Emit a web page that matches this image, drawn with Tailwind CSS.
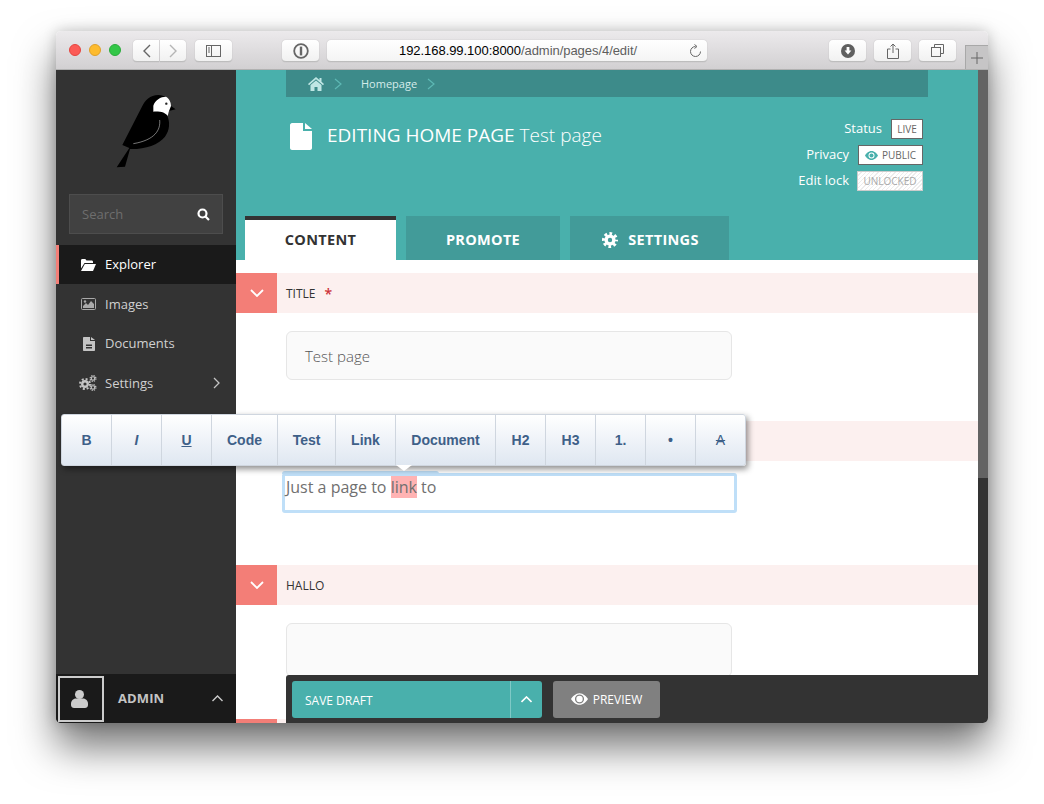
<!DOCTYPE html>
<html lang="en">

<head>
    <meta charset="UTF-8">
    <meta name="viewport" content="width=device-width, initial-scale=1.0">
    <script src="https://cdn.jsdelivr.net/npm/@tailwindcss/browser@4"></script>
    <title>Editing Home Page Test page</title>
</head>

<body class="bg-white h-[804px] w-[1044px] overflow-hidden font-['Open_Sans',sans-serif] pt-[31px] pl-[56px]">
    <div class="relative w-[932px] h-[692px] rounded-[5px] shadow-[0_24px_40px_rgba(0,0,0,0.55),0_0_14px_rgba(0,0,0,0.2)] flex flex-col">
        <!-- Browser toolbar -->
        <header class="h-[39px] shrink-0 rounded-t-[5px] border-b border-[#b1b1b1] bg-gradient-to-b from-[#eceaec] to-[#d2d0d2] flex items-start pt-[9px] pl-[13px] relative">
            <span class="w-3 h-3 mt-[4px] rounded-full bg-[#fc5b57] border border-[#e5453f]"></span>
            <span class="w-3 h-3 mt-[4px] ml-2 rounded-full bg-[#fdbb2e] border border-[#e0a028]"></span>
            <span class="w-3 h-3 mt-[4px] ml-2 rounded-full bg-[#33c748] border border-[#2aac3b]"></span>
            <button class="ml-[12px] w-[26px] h-[22px] rounded-l-[4px] bg-gradient-to-b from-white to-[#f1f1f1] border-b border-[#bdbdbd] shadow-[0_0_1px_rgba(0,0,0,0.3)] flex items-center justify-center">
                <svg width="9" height="14" viewBox="0 0 9 14" fill="none" stroke="#666" stroke-width="1.4"><path d="M8 1 2 7l6 6"/></svg>
            </button>
            <button class="ml-[1px] w-[26px] h-[22px] rounded-r-[4px] bg-gradient-to-b from-white to-[#f1f1f1] border-b border-[#bdbdbd] shadow-[0_0_1px_rgba(0,0,0,0.3)] flex items-center justify-center">
                <svg width="9" height="14" viewBox="0 0 9 14" fill="none" stroke="#b5b5b5" stroke-width="1.4"><path d="m1 1 6 6-6 6"/></svg>
            </button>
            <button class="ml-[9px] w-[37px] h-[22px] rounded-[4px] bg-gradient-to-b from-white to-[#f1f1f1] border-b border-[#bdbdbd] shadow-[0_0_1px_rgba(0,0,0,0.3)] flex items-center justify-center">
                <svg width="15" height="12" viewBox="0 0 15 12" fill="none" stroke="#666"><rect x=".5" y=".5" width="14" height="11"/><path d="M5.5 0v12M2 3h2M2 5h2M2 7h2"/></svg>
            </button>
            <button class="ml-[50px] w-[37px] h-[22px] rounded-[4px] bg-gradient-to-b from-white to-[#f1f1f1] border-b border-[#bdbdbd] shadow-[0_0_1px_rgba(0,0,0,0.3)] flex items-center justify-center">
                <svg width="16" height="16" viewBox="0 0 16 16"><circle cx="8" cy="8" r="6.8" fill="none" stroke="#666" stroke-width="1.8"/><rect x="6.8" y="3.6" width="2.4" height="8.8" fill="#666"/></svg>
            </button>
            <div class="relative ml-[8px] w-[380px] h-[22px] rounded-[4px] bg-gradient-to-b from-white to-[#f4f4f4] border-b border-[#bdbdbd] shadow-[0_0_1px_rgba(0,0,0,0.3)] flex items-center justify-center pl-[2px] font-['Liberation_Sans',sans-serif] text-[13px] tracking-[-0.05px] text-black">
                <span>192.168.99.100:8000<span class="text-[#5e5e5e]">/admin/pages/4/edit/</span></span>
                <svg class="absolute right-[6px] top-[4px]" width="13" height="14" viewBox="0 0 13 14" fill="none" stroke="#666"><path d="M7.5 2.5a5 5 0 1 0 5 5"/><path d="M6.5.5 9 2.5 6.5 4.5" /></svg>
            </div>
            <button class="ml-[122px] w-[37px] h-[22px] rounded-[4px] bg-gradient-to-b from-white to-[#f1f1f1] border-b border-[#bdbdbd] shadow-[0_0_1px_rgba(0,0,0,0.3)] flex items-center justify-center">
                <svg width="14" height="14" viewBox="0 0 14 14"><circle cx="7" cy="7" r="7" fill="#5f5f5f"/><path d="M5.6 3h2.8v3.5h2L7 10.5l-3.400-4h2z" fill="#fff"/></svg>
            </button>
            <button class="ml-[8px] w-[37px] h-[22px] rounded-[4px] bg-gradient-to-b from-white to-[#f1f1f1] border-b border-[#bdbdbd] shadow-[0_0_1px_rgba(0,0,0,0.3)] flex items-center justify-center">
                <svg width="12" height="16" viewBox="0 0 12 16" fill="none" stroke="#666"><path d="M3.500 6H.5v9.500h11V6h-3M6 10V1M3.500 3.500 6 1l2.500 2.500"/></svg>
            </button>
            <button class="ml-[8px] w-[37px] h-[22px] rounded-[4px] bg-gradient-to-b from-white to-[#f1f1f1] border-b border-[#bdbdbd] shadow-[0_0_1px_rgba(0,0,0,0.3)] flex items-center justify-center">
                <svg width="13" height="13" viewBox="0 0 13 13" fill="none" stroke="#666"><rect x=".5" y="3.500" width="9" height="9"/><path d="M3.500 3.500v-3h9v9h-3"/></svg>
            </button>
            <div class="absolute right-0 bottom-0 w-[23px] h-[24px] bg-[#c6c5c6] border-t border-l border-[#a8a8a8] flex items-center justify-center">
                <svg width="12" height="12" viewBox="0 0 12 12" stroke="#666"><path d="M6 0v12M0 6h12"/></svg>
            </div>
        </header>

        <div class="flex flex-1 min-h-0 overflow-hidden rounded-b-[5px]">
            <!-- Sidebar -->
            <aside class="w-[180px] shrink-0 bg-[#333] flex flex-col">
                <svg class="ml-[34px] mt-[10px]" width="100" height="100" viewBox="0 0 300 300">
                    <path d="M205 45C180 45 165 60 155 82L97 195 118 204 80 262 105 260 120 207C165 208 205 195 225 170 240 150 240 125 232 108L237 93 257 88 243 78C235 55 225 45 205 45Z" fill="#000"/>
                    <path d="M190 77C195 60 212 50 228 50 238 55 243 67 243 78L237 93 233 108C225 98 215 94 190 95Z" fill="#fff"/>
                    <circle cx="229" cy="71" r="3.500" fill="#222"/>
                    <path d="M209 120C212 150 195 180 130 191" fill="none" stroke="#ddd" stroke-width="1.600"/>
                </svg>
                <div class="ml-[13px] mt-[14px] w-[154px] h-[40px] border border-[#4d4d4d] bg-[#414141] flex items-center justify-between pl-[12px] pr-[12px] text-[13px] text-[#6e6e6e]">
                    <span class="pt-[2px]">Search</span>
                    <svg width="13" height="13" viewBox="0 0 13 13" fill="none" stroke="#fff" stroke-width="2.200"><circle cx="5.500" cy="5.500" r="4"/><path d="m8.500 8.500 3.500 3.500"/></svg>
                </div>
                <nav class="mt-[11px] text-[13px] text-[#d0d0d0]">
                    <a class="h-[39px] bg-[#1a1a1a] border-l-[3px] border-[#f37e77] text-white flex items-center pl-[22px] gap-[9px]">
                        <svg class="w-[15px]" width="15" height="12" viewBox="0 0 15 12" fill="#fff"><path d="M0 1.500C0 .7.500 0 1.300 0h3l1.200 1.500h5.200c.7 0 1.300.6 1.300 1.300V4H3.500L0 9.500z"/><path d="M3.800 5H15l-3 7H0z"/></svg>
                        <span>Explorer</span>
                    </a>
                    <a class="h-[40px] flex items-center pl-[25px] gap-[9px]">
                        <svg width="15" height="12" viewBox="0 0 15 12"><rect x=".5" y=".5" width="14" height="11" rx="1" fill="none" stroke="#aaa"/><path d="M2 10V8l3-3 2 2 3-4 3 3v4z" fill="#aaa"/><circle cx="4" cy="3.500" r="1.200" fill="#aaa"/></svg>
                        <span class="pt-[2px]">Images</span>
                    </a>
                    <a class="h-[39px] flex items-center pl-[25px] gap-[9px]">
                        <svg class="ml-[2px] mr-[1px]" width="12" height="14" viewBox="0 0 12 14" fill="#c4c4c4"><path fill-rule="evenodd" d="M0 1C0 .4.400 0 1 0h6v4h5v9c0 .6-.4 1-1 1H1c-.6 0-1-.4-1-1zm3 6.500V9h6V7.500zm0 2.500v1.500h6V10z"/><path d="M8 0l4 3H8z"/></svg>
                        <span>Documents</span>
                    </a>
                    <a class="h-[40px] flex items-center pl-[23px] pr-[16px] gap-[8px]">
                        <svg width="18" height="16" viewBox="0 0 18 16" fill="none" stroke="#c4c4c4">
                            <circle cx="6" cy="9" r="2.800" stroke-width="2.400"/>
                            <circle cx="6" cy="9" r="5" stroke-width="2" stroke-dasharray="2 1.930"/>
                            <circle cx="14" cy="3.500" r="1.700" stroke-width="1.100"/>
                            <circle cx="14" cy="3.500" r="2.900" stroke-width="1.200" stroke-dasharray="1.300 1"/>
                            <circle cx="14" cy="12.500" r="1.700" stroke-width="1.100"/>
                            <circle cx="14" cy="12.500" r="2.900" stroke-width="1.200" stroke-dasharray="1.300 1"/>
                        </svg>
                        <span class="pt-[2px]">Settings</span>
                        <svg class="ml-auto" width="7" height="12" viewBox="0 0 7 12" fill="none" stroke="#c4c4c4" stroke-width="1.300"><path d="m1 1 5 5-5 5"/></svg>
                    </a>
                </nav>
                <div class="mt-auto h-[49px] bg-[#1a1a1a] flex items-center pl-[2px] pr-[13px]">
                    <div class="w-[46px] h-[46px] border-2 border-[#ccc] flex items-center justify-center pr-[3px]">
                        <svg width="17" height="18" viewBox="0 0 17 18" fill="#ccc"><circle cx="8.500" cy="4.500" r="4.500"/><path d="M0 14c0-4 3-5.500 5-5.500h7c2 0 5 1.500 5 5.500v1c0 2-1.500 3-3 3H3c-1.500 0-3-1-3-3z"/></svg>
                    </div>
                    <span class="ml-[14px] text-[13px] font-bold tracking-[0.1px] text-[#c4c4c4]">ADMIN</span>
                    <svg class="ml-auto" width="11" height="7" viewBox="0 0 11 7" fill="none" stroke="#ccc" stroke-width="1.400"><path d="m.5 6 5-5 5 5"/></svg>
                </div>
            </aside>

            <!-- Main column -->
            <main class="w-[742px] shrink-0 bg-white flex flex-col">
                <section class="h-[190px] shrink-0 bg-[#49b0ac] flex flex-col">
                    <div class="ml-[50px] w-[642px] h-[27px] bg-[#3d8b8a] flex items-center pl-[22px] text-[11px] text-[#d5eceb]">
                        <svg width="16" height="14" viewBox="0 0 16 14" fill="#bfe6e4"><path d="M8 0 0 7l1 1.200L8 2.200l7 6L16 7l-2.500-2.200V1h-2v2z"/><path d="M8 3.400 2.500 8v6h4v-4h3v4h4V8z"/></svg>
                        <svg class="ml-[10px]" width="8" height="12" viewBox="0 0 8 12" fill="none" stroke="#5db8b4" stroke-width="1.200"><path d="m1 1 6 5-6 5"/></svg>
                        <span class="ml-[19px] pt-[2px]">Homepage</span>
                        <svg class="ml-[10px]" width="8" height="12" viewBox="0 0 8 12" fill="none" stroke="#5db8b4" stroke-width="1.200"><path d="m1 1 6 5-6 5"/></svg>
                    </div>
                    <div class="flex justify-between pl-[54px] pr-[55px] pt-[22px]">
                        <div class="flex items-start gap-[15px] pt-[4px]">
                            <svg width="22" height="27" viewBox="0 0 22 27" fill="#fff"><path d="M2 0h11v8h9v17c0 1-1 2-2 2H2c-1 0-2-1-2-2V2C0 1 1 0 2 0z"/><path d="M15 0l7 6h-7z"/></svg>
                            <h1 class="text-[19px] leading-[24px] text-white font-medium">EDITING HOME PAGE <span class="font-light">Test page</span></h1>
                        </div>
                        <div class="flex flex-col items-end gap-[6px] text-[13px] text-white">
                            <div class="flex items-center gap-[9px]"><span>Status</span><span class="h-[20px] w-[32px] bg-white border border-[#666] flex items-center justify-center text-[10px] text-[#666]">LIVE</span></div>
                            <div class="flex items-center gap-[9px]"><span>Privacy</span><span class="h-[20px] w-[65px] bg-white border border-[#666] flex items-center justify-center gap-[4px] text-[10px] text-[#666]"><svg width="13" height="9" viewBox="0 0 13 9"><path fill-rule="evenodd" d="M6.500 0C9.500 0 12 2.500 13 4.500 12 6.500 9.500 9 6.500 9S1 6.500 0 4.500C1 2.500 3.500 0 6.500 0zm0 1.500a3 3 0 1 0 0 6 3 3 0 0 0 0-6z" fill="#49b0ac"/><circle cx="6.500" cy="4.500" r="2" fill="#49b0ac"/></svg>PUBLIC</span></div>
                            <div class="flex items-center gap-[8px]"><span>Edit lock</span><span class="h-[20px] w-[66px] border border-[#ccc] bg-[repeating-linear-gradient(135deg,#fff,#fff_2px,#ececec_2px,#ececec_3px)] flex items-center justify-center text-[10px] text-[#aaa]">UNLOCKED</span></div>
                        </div>
                    </div>
                    <div class="mt-auto pl-[9px] flex gap-[10px] text-[14.500px] font-bold tracking-[0.3px]">
                        <a class="h-[44px] w-[151px] bg-white border-t-4 border-[#333] text-[#333] flex items-center justify-center pb-[1px]">CONTENT</a>
                        <a class="h-[44px] w-[154px] bg-[#429b99] text-white flex items-center justify-center pt-[4px]">PROMOTE</a>
                        <a class="h-[44px] w-[159px] bg-[#429b99] text-white flex items-center justify-center gap-[10px] pt-[4px] pl-[2px]">
                            <svg width="16" height="16" viewBox="0 0 16 16" fill="none" stroke="#fff"><circle cx="8" cy="8" r="3.900" stroke-width="3.400"/><circle cx="8" cy="8" r="6.300" stroke-width="3.400" stroke-dasharray="2.600 2.350" stroke-dashoffset="1.300"/></svg>
                            SETTINGS
                        </a>
                    </div>
                </section>

                <div class="mt-[13px] h-[40px] shrink-0 bg-[#fcf0ef] flex items-center text-[12px] text-[#333]">
                    <span class="w-[41px] h-full bg-[#f37e77] flex items-center justify-center"><svg width="14" height="8" viewBox="0 0 14 8" fill="none" stroke="#fff" stroke-width="1.800"><path d="m1 1 6 6 6-6"/></svg></span>
                    <span class="ml-[9px] pt-[2px]">TITLE</span><span class="ml-[9px] text-[#cd3238] font-semibold text-[14px]">*</span>
                </div>
                <div class="ml-[50px] mt-[18px] w-[446px] h-[49px] shrink-0 rounded-[6px] border border-[#e6e6e6] bg-[#fafafa] flex items-center pl-[18px] pt-[2px] text-[15px] font-light text-[#555]">Test page</div>

                <div class="mt-[41px] h-[40px] shrink-0 bg-[#fcf0ef]"></div>
                <div class="relative ml-[46px] mt-[12px] w-[455px] h-[40px] shrink-0 rounded-[3px] border-[3px] border-[#bfdff8] bg-white pl-[1px] text-[16px] leading-[22px] text-[#707070]">Just a page to <span class="bg-[#ffb3b3]">link</span> to<span class="absolute -left-[3px] -top-[5px] w-[157px] h-[3px] rounded-t-[3px] bg-[#bfdff8]"></span></div>

                <div class="mt-[52px] h-[40px] shrink-0 bg-[#fcf0ef] flex items-center text-[12px] text-[#333]">
                    <span class="w-[41px] h-full bg-[#f37e77] flex items-center justify-center"><svg width="14" height="8" viewBox="0 0 14 8" fill="none" stroke="#fff" stroke-width="1.800"><path d="m1 1 6 6 6-6"/></svg></span>
                    <span class="ml-[9px] pt-[2px]">HALLO</span>
                </div>
                <div class="ml-[50px] mt-[18px] w-[446px] h-[54px] shrink-0 rounded-[6px] border border-[#e6e6e6] bg-[#fafafa]"></div>

                <div class="mt-[42px] h-[40px] shrink-0 bg-[#fcf0ef]"><span class="block w-[41px] h-full bg-[#f37e77]"></span></div>
            </main>

            <!-- Scrollbar -->
            <div class="w-[10px] shrink-0 bg-[#333]">
                <div class="h-[408px] bg-[#636363]"></div>
            </div>
        </div>

        <!-- Save bar -->
        <div class="absolute left-[230px] right-[10px] bottom-0 h-[48px] bg-[#333] rounded-tl-[3px] flex items-center pl-[6px] text-[12px] text-white">
            <button class="w-[250px] h-[37px] rounded-[3px] bg-[#49b0ac] flex items-center">
                <span class="flex-1 text-left pl-[13px] pt-[3px]">SAVE DRAFT</span>
                <span class="w-[32px] h-full border-l border-[#7fc9c6] flex items-center justify-center"><svg width="11" height="7" viewBox="0 0 11 7" fill="none" stroke="#fff" stroke-width="1.600"><path d="m.5 6 5-5 5 5"/></svg></span>
            </button>
            <button class="ml-[11px] w-[107px] h-[37px] rounded-[3px] bg-[#808080] flex items-center justify-center gap-[5px]">
                <svg width="17" height="12" viewBox="0 0 16 11"><path fill-rule="evenodd" d="M8 0c3.500 0 6.500 3 8 5.500C14.500 8 11.500 11 8 11S1.500 8 0 5.500C1.500 3 4.500 0 8 0zm0 1.200a4.300 4.300 0 1 0 0 8.600 4.300 4.300 0 0 0 0-8.600z" fill="#fff"/><circle cx="8" cy="5.500" r="3" fill="#fff"/></svg>
                <span class="pt-[2px]">PREVIEW</span>
            </button>
        </div>

        <!-- Hallo formatting toolbar -->
        <div class="absolute left-[5px] top-[383px] h-[52px] flex rounded-[3px] border border-[#cfd6df] bg-gradient-to-b from-white to-[#dfe7f1] shadow-[2px_3px_6px_rgba(0,0,0,0.45)] font-['Liberation_Sans',sans-serif] text-[14px] font-bold text-[#3e6088]">
            <button class="w-[49px]">B</button>
            <button class="w-[50px] border-l border-[#cfd6df] italic">I</button>
            <button class="w-[50px] border-l border-[#cfd6df] underline">U</button>
            <button class="w-[66px] border-l border-[#cfd6df]">Code</button>
            <button class="w-[58px] border-l border-[#cfd6df]">Test</button>
            <button class="w-[60px] border-l border-[#cfd6df]">Link</button>
            <button class="w-[100px] border-l border-[#cfd6df]">Document</button>
            <button class="w-[50px] border-l border-[#cfd6df]">H2</button>
            <button class="w-[50px] border-l border-[#cfd6df]">H3</button>
            <button class="w-[50px] border-l border-[#cfd6df]">1.</button>
            <button class="w-[50px] border-l border-[#cfd6df]">•</button>
            <button class="w-[50px] border-l border-[#cfd6df] line-through font-normal">A</button>
            <span class="absolute left-[334px] top-[50px] w-0 h-0 border-x-[8px] border-x-transparent border-t-[6px] border-t-white"></span>
        </div>
    </div>
</body>

</html>
